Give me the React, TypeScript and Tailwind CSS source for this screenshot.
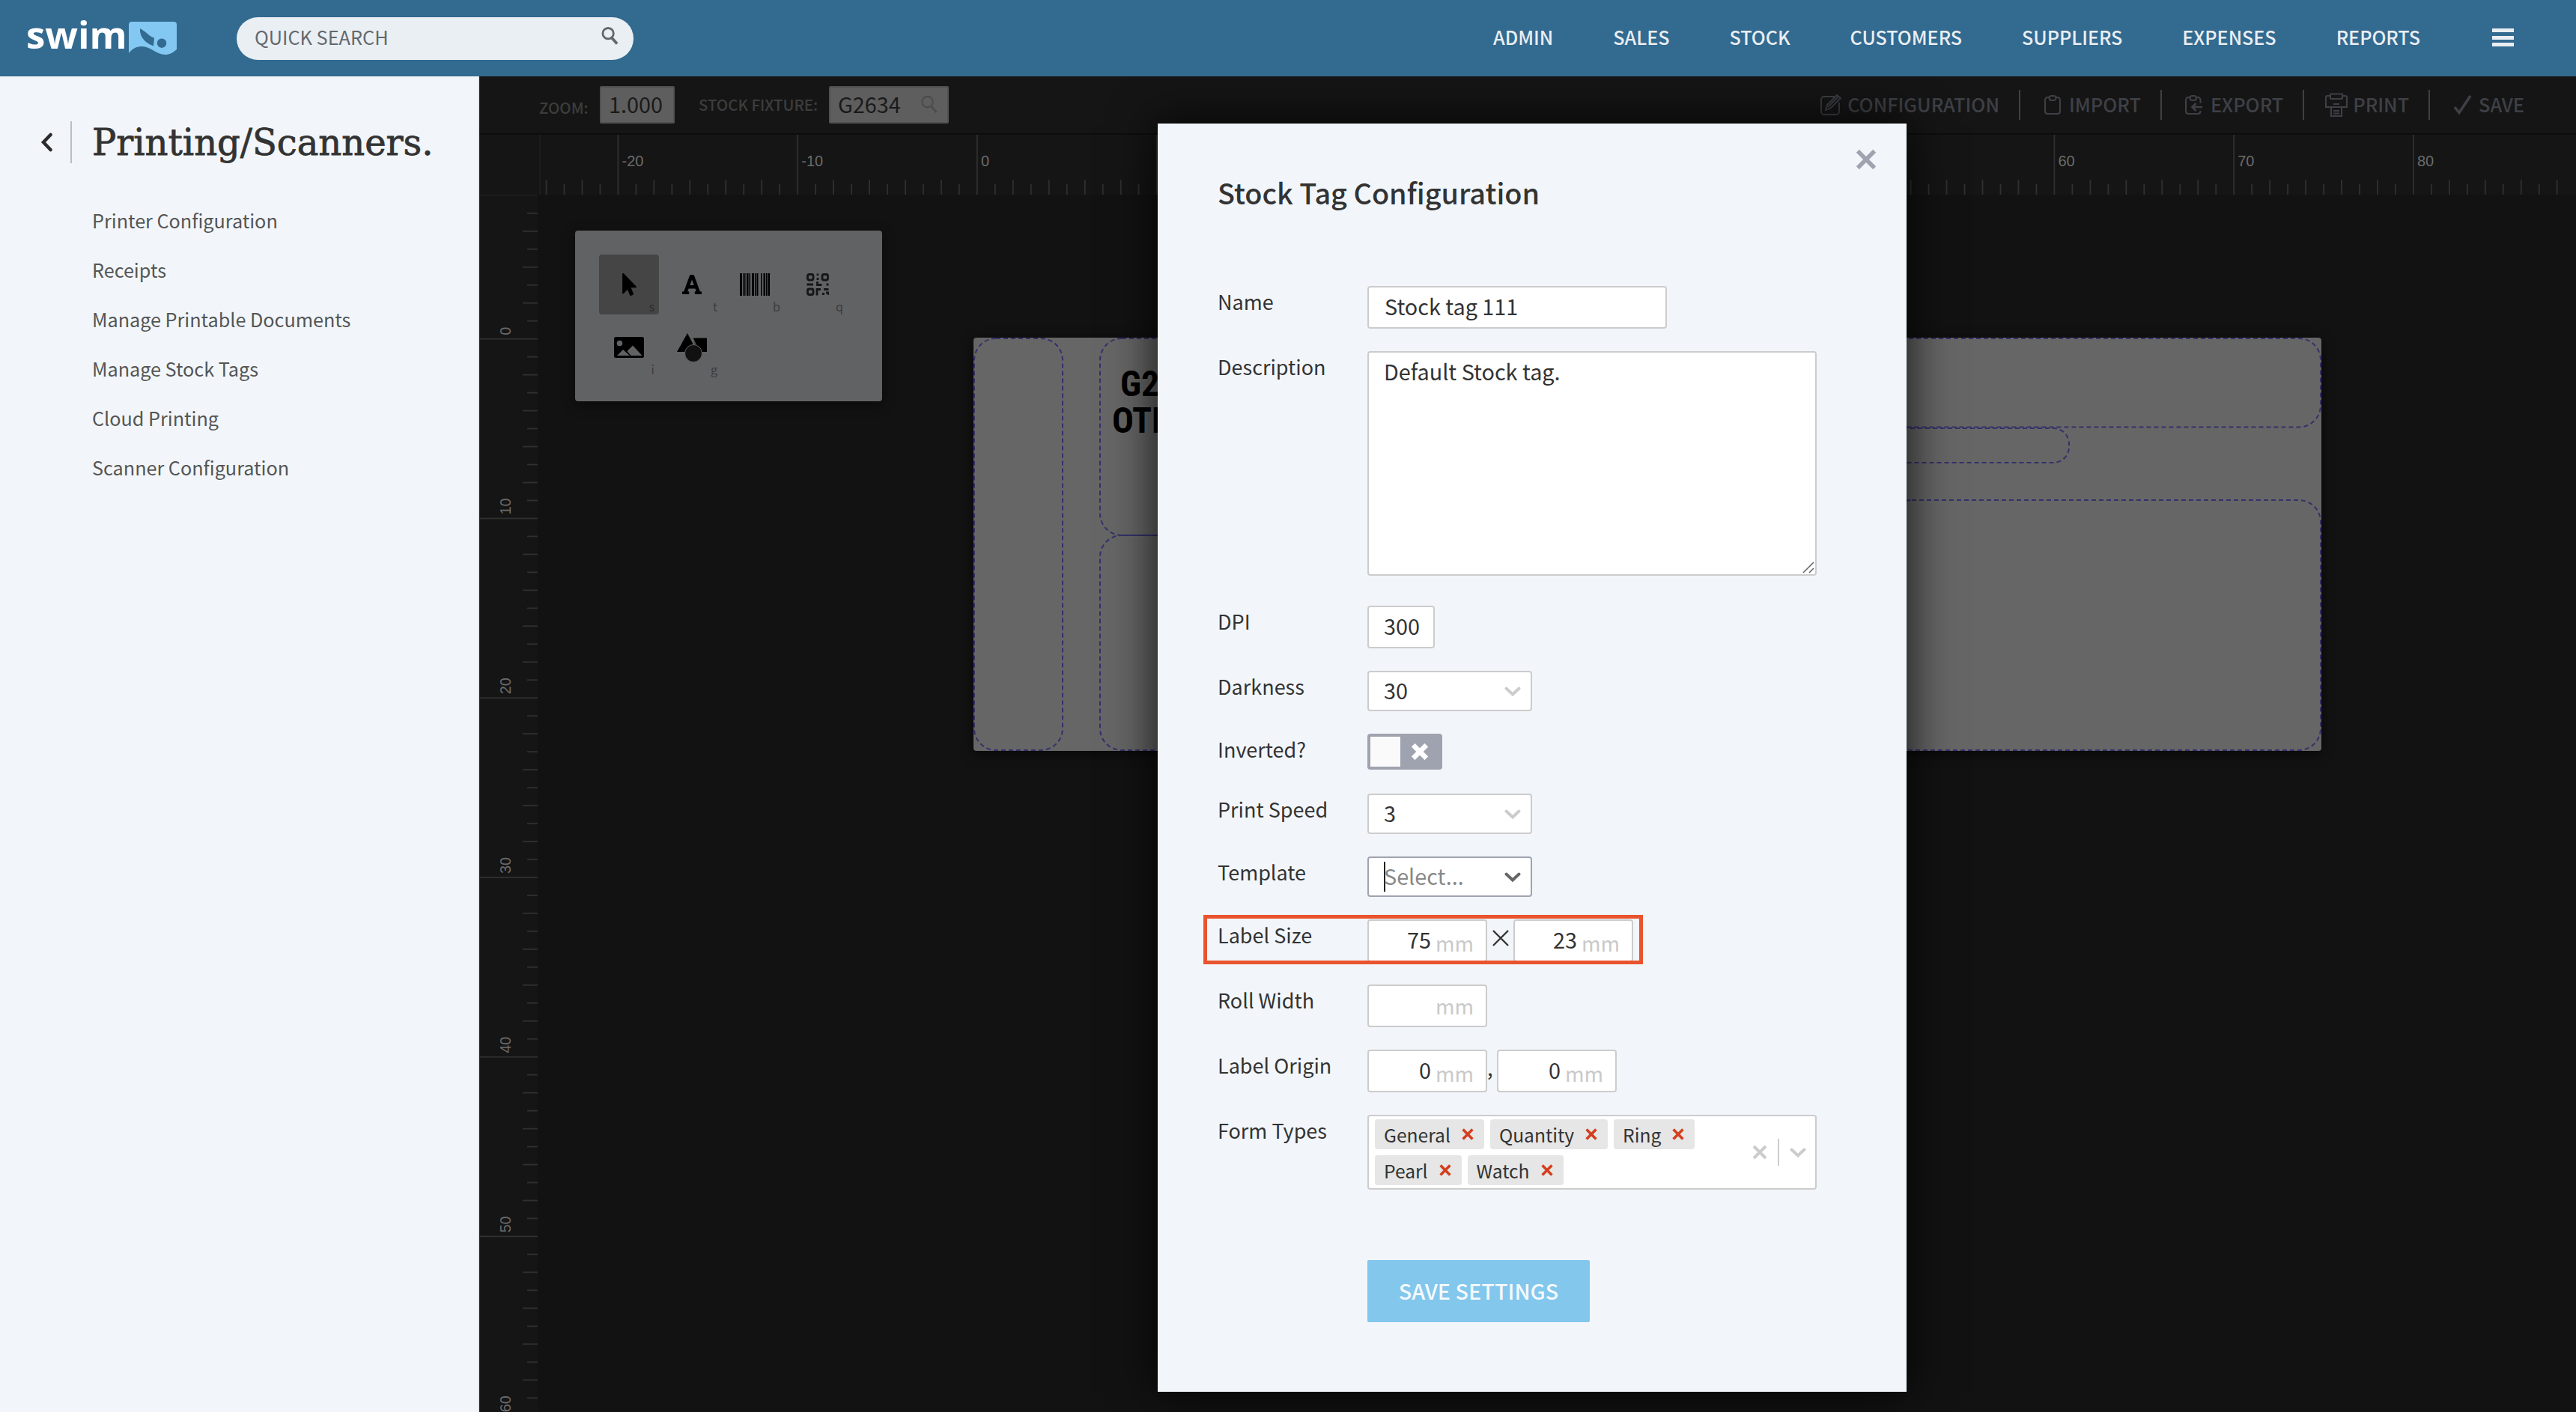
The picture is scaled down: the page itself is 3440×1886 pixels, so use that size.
import React from 'react';
import { FaFont, FaMousePointer } from 'react-icons/fa';

const navItems = ['ADMIN', 'SALES', 'STOCK', 'CUSTOMERS', 'SUPPLIERS', 'EXPENSES', 'REPORTS'];

const sidebarItems = [
  'Printer Configuration',
  'Receipts',
  'Manage Printable Documents',
  'Manage Stock Tags',
  'Cloud Printing',
  'Scanner Configuration',
];

// One millimetre on screen, in px
const MM = 23.975;

const Logo: React.FC = () => (
  <div className="flex items-center w-[201px] h-full">
    <span className="w-[137px] font-['Open_Sans',sans-serif] font-bold text-[51px] leading-[70px] text-white pb-[12px]">
      swim
    </span>
    <svg width="64" height="45" viewBox="0 0 64 45" className="shrink-0">
      <path
        fill="#82c8f2"
        fillRule="evenodd"
        d="M4 0H60a4 4 0 0 1 4 4V37C58 42 54 44 49 44C36 44 30 33 17 33C9 33 4 37 0 42V4a4 4 0 0 1 4-4Z
          M15 9C14 18 20 28 33 32.500L34 21.500C29 21 24 14 15 9Z
          M44 22.500a6.200 6.200 0 1 0 .01 0Z"
      />
    </svg>
  </div>
);

const SearchIcon = ({ className, strokeWidth }: { className: string; strokeWidth: number }) => (
  <svg viewBox="0 0 24 26" className={className} fill="none" stroke="currentColor" strokeWidth={strokeWidth}>
    <circle cx="9.500" cy="9.500" r="7.500" />
    <path d="M14.500 15.500L22 24" strokeWidth={strokeWidth * 1.3} />
  </svg>
);

const CloseIcon = ({ size, strokeWidth, className }: { size: number; strokeWidth: number; className?: string }) => (
  <svg width={size} height={size} viewBox="0 0 20 20" className={className} fill="none" stroke="currentColor" strokeWidth={strokeWidth}>
    <path d="M2 2L18 18M18 2L2 18" />
  </svg>
);

const ChevronIcon = ({ className }: { className?: string }) => (
  <svg width="22" height="13" viewBox="0 0 22 13" className={className} fill="none" stroke="currentColor" strokeWidth="4" strokeLinecap="round">
    <path d="M2.500 2.500L11 10.500L19.500 2.500" />
  </svg>
);

const Header: React.FC = () => (
  <header className="flex items-center h-[102px] shrink-0 bg-[#336a90] pl-[35px] pr-[83px]">
    <Logo />
    <div className="flex items-center justify-between w-[530px] h-[57px] ml-[80px] rounded-full bg-[#eaeff4] pl-[24px] pr-[20px] text-[#63686d]">
      <span className="text-[25.3px] leading-[40px] pb-[4px]">QUICK SEARCH</span>
      <SearchIcon className="w-[23px] h-[26px] mb-[7px]" strokeWidth={3} />
    </div>
    <nav className="flex items-center gap-[80px] ml-auto text-[25.1px] font-medium leading-[40px] text-[#e9eef2] pb-[4px]">
      {navItems.map(item => (
        <a key={item}>{item}</a>
      ))}
    </nav>
    <div className="flex flex-col gap-[4.500px] ml-[96px] mb-[2px]">
      <div className="w-[29px] h-[5px] bg-[#e9eef2]" />
      <div className="w-[29px] h-[5px] bg-[#e9eef2]" />
      <div className="w-[29px] h-[5px] bg-[#e9eef2]" />
    </div>
  </header>
);

const Sidebar: React.FC = () => (
  <aside className="w-[640px] shrink-0 bg-[#f2f6fa] border-r-2 border-[#e4e8eb] pt-[60px]">
    <div className="flex items-center h-[56px]">
      <svg width="16" height="26" viewBox="0 0 16 26" className="ml-[54px]" fill="none" stroke="#2b2b2b" strokeWidth="4.500" strokeLinecap="round">
        <path d="M13.500 3L4 13L13.500 23" />
      </svg>
      <div className="w-[2px] h-[56px] ml-[24px] bg-[#bcbfc2]" />
      <h1 className="ml-[27px] font-['DejaVu_Serif',serif] text-[48px] leading-[56px] text-[#333] [-webkit-text-stroke:0.8px_#333]">
        Printing/Scanners.
      </h1>
    </div>
    <ul className="mt-[43px] ml-[123px]">
      {sidebarItems.map(item => (
        <li key={item} className="h-[66px] text-[25.2px] leading-[67px] text-[#555]">
          {item}
        </li>
      ))}
    </ul>
  </aside>
);

const ConfigurationIcon = () => (
  <svg width="28" height="30" viewBox="0 0 28 30" fill="none" stroke="currentColor" strokeWidth="1.800">
    <path d="M19 4H5a4 4 0 0 0-4 4V24a4 4 0 0 0 4 4H21a4 4 0 0 0 4-4V12" />
    <path d="M7 22L9 15L22 2L27 6L13.500 19.500ZM10 18L23.500 4.500" />
  </svg>
);

const ClipboardIcon = () => (
  <svg width="22" height="28" viewBox="0 0 22 28" fill="none" stroke="currentColor" strokeWidth="2">
    <path d="M6 4H4.500A3.500 3.500 0 0 0 1 7.500V23A3.500 3.500 0 0 0 4.500 26H17.500A3.500 3.500 0 0 0 21 23V7.500A3.500 3.500 0 0 0 17.500 4H16" />
    <rect x="6.500" y="2" width="9" height="6" rx="3" />
  </svg>
);

const ExportIcon = () => (
  <svg width="24" height="28" viewBox="0 0 24 28" fill="none" stroke="currentColor" strokeWidth="2">
    <path d="M6 4H4.500A3.500 3.500 0 0 0 1 7.500V23A3.500 3.500 0 0 0 4.500 26H17A3.500 3.500 0 0 0 20.500 23V22M15.500 4H17A3.500 3.500 0 0 1 20.500 7.500V12" />
    <rect x="6.500" y="2" width="8.500" height="6" rx="3" />
    <path d="M23 17H10M14.500 12L9.500 17L14.500 22" strokeWidth="2.600" />
  </svg>
);

const PrintIcon = () => (
  <svg width="30" height="32" viewBox="0 0 30 32" fill="none" stroke="currentColor" strokeWidth="2">
    <path d="M7 8V1.500H23V8" />
    <path d="M7 4H3a2 2 0 0 0-2 2V19H29V6a2 2 0 0 0-2-2H23M7 8H23" />
    <path d="M11 15H19M8 20V31H22V20M11 24H19M11 27.500H19" />
  </svg>
);

const CheckIcon = () => (
  <svg width="25" height="28" viewBox="0 0 25 28" fill="none" stroke="currentColor" strokeWidth="3.600">
    <path d="M2 17L8 24.500L23 2" />
  </svg>
);

const toolbarActions = [
  { label: 'CONFIGURATION', icon: <ConfigurationIcon /> },
  { label: 'IMPORT', icon: <ClipboardIcon /> },
  { label: 'EXPORT', icon: <ExportIcon /> },
  { label: 'PRINT', icon: <PrintIcon /> },
  { label: 'SAVE', icon: <CheckIcon /> },
];

const Toolbar: React.FC = () => (
  <div className="flex items-center h-[78px] shrink-0 bg-[#151515] border-b-2 border-[#0d0d0d] pl-[80px] pr-[69px]">
    <span className="w-[81px] text-[20.4px] font-medium leading-[30px] text-[#3d3d3d] pt-[6px]">ZOOM:</span>
    <div className="flex items-center w-[100px] h-[50px] rounded-xs border-2 border-[#515151] bg-[#5e5e5e] pl-[10px] text-[28.8px] text-[#1a1a1a] leading-[44px] pb-[2px]">
      1.000
    </div>
    <span className="w-[174px] ml-[32px] text-[20.4px] font-medium leading-[30px] text-[#3d3d3d] pb-[2px] whitespace-nowrap">STOCK FIXTURE:</span>
    <div className="flex items-center justify-between w-[160px] h-[50px] rounded-xs border-2 border-[#515151] bg-[#5e5e5e] pl-[10px] pr-[12px] pb-[2px]">
      <span className="text-[28.8px] text-[#1a1a1a] leading-[44px]">G2634</span>
      <SearchIcon className="w-[24px] h-[25px] text-[#4c4c4c]" strokeWidth={2.200} />
    </div>
    <div className="flex items-center ml-auto">
      {toolbarActions.map(({ label, icon }, index) => (
        <div
          key={label}
          className={`flex items-center h-[40px] text-[#3f4046] ${index < toolbarActions.length - 1 ? 'border-r-2 border-[#3f4046] pr-[26px]' : ''}`}
        >
          <div className="flex justify-center w-[30px] ml-[28px] mr-[7px]">{icon}</div>
          <span className="text-[25.3px] font-medium leading-[36px] pb-[3px]">{label}</span>
        </div>
      ))}
    </div>
  </div>
);

const range = (from: number, to: number) => Array.from({ length: to - from + 1 }, (_, i) => from + i);

const tickLength = (n: number, full: number) => (n % 10 === 0 ? full : n % 2 === 0 ? 20 : 14);

const HorizontalRuler: React.FC = () => (
  <svg width="2800" height="80" className="block shrink-0 bg-[#151515]" fontFamily="Liberation Sans, Arial, sans-serif" fontSize="20">
    <rect x="80" y="0" width="2" height="80" fill="#1d1d1d" />
    {range(-24, 88).map(n => {
      const x = 665 + n * MM;
      const h = tickLength(n, 80);
      return (
        <g key={n}>
          <rect x={x - 1} y={80 - h} width="1.800" height={h} fill="#303030" />
          {n % 10 === 0 && <text x={x + 5} y="42" fill="#6b6b6b">{n}</text>}
        </g>
      );
    })}
  </svg>
);

const VerticalRuler: React.FC = () => (
  <svg width="78" height="1626" className="block shrink-0 bg-[#151515]" fontFamily="Liberation Sans, Arial, sans-serif" fontSize="20">
    <rect x="0" y="0" width="78" height="2" fill="#1c1c1c" />
    {range(-7, 60).map(n => {
      const y = 192.8 + n * MM;
      const w = tickLength(n, 77);
      return (
        <g key={n}>
          <rect x={78 - w} y={y - 1} width={w} height="1.800" fill="#303030" />
          {n % 10 === 0 && (
            <text transform={`translate(42 ${y - 5}) rotate(-90)`} fill="#6b6b6b">{n}</text>
          )}
        </g>
      );
    })}
  </svg>
);

const BarcodeIcon = () => (
  <svg width="40" height="30" viewBox="0 0 40 30">
    {[[0, 3], [4, 1], [6, 1.5], [9, 2.5], [12.5, 1.500], [16, 3], [20, 1.5], [22.500, 2], [28, 1.5], [31.5, 2.5], [35, 1.500], [37.5, 2.500]].map(([x, w]) => (
      <rect key={x} x={x} y="0" width={w} height="30" />
    ))}
  </svg>
);

const QrIcon = () => (
  <svg width="30" height="30" viewBox="0 0 30 30" fill="none" stroke="#161616" strokeWidth="2.800">
    <rect x="1.500" y="1.500" width="7.500" height="7.500" rx="2" />
    <rect x="21" y="1.500" width="7.500" height="7.500" rx="2" />
    <rect x="1.500" y="21" width="7.500" height="7.500" rx="2" />
    <path d="M15 0.500V3M15 6V9M0.500 15H9M14.500 11V15.500H20.500M26.500 15H29.500M14 29.500V21.500H19M23 21.500H29.500M21 27.500H24M26 26H29.500V29" />
  </svg>
);

const ImageIcon = () => (
  <svg width="40" height="28" viewBox="0 0 40 28">
    <rect width="40" height="28" rx="2.500" />
    <circle cx="7.500" cy="8.500" r="3.800" fill="#616264" />
    <path d="M4 25L12 17L21 25ZM17.500 19L25 11.500L37.500 25H22.500Z" fill="#616264" />
  </svg>
);

const ShapesIcon = () => (
  <svg width="40" height="39" viewBox="0 0 40 39">
    <path d="M14 0L27 25H0Z" />
    <path d="M21 6.500H40V25H28Z" />
    <path d="M21 6L26 17" stroke="#616264" strokeWidth="1" />
    <circle cx="22" cy="27" r="11.500" fill="#111" stroke="#616264" strokeWidth="1" />
  </svg>
);

const tools = [
  { key: 's', icon: <FaMousePointer className="w-[19px] h-[30px]" />, active: true },
  { key: 't', icon: <FaFont className="w-[26px] h-[30px]" /> },
  { key: 'b', icon: <BarcodeIcon /> },
  { key: 'q', icon: <QrIcon /> },
  { key: 'i', icon: <ImageIcon /> },
  { key: 'g', icon: <ShapesIcon /> },
];

const ToolPanel: React.FC = () => (
  <div className="absolute left-[50px] top-[48px] w-[410px] h-[228px] rounded-sm bg-[#616264] p-[32px] shadow-[0_4px_16px_rgba(0,0,0,0.5)]">
    <div className="flex flex-wrap gap-1 text-black">
      {tools.map(({ key, icon, active }) => (
        <div key={key} className={`relative flex items-center justify-center w-[80px] h-[80px] rounded-sm ${active ? 'bg-[#454545]' : ''}`}>
          {icon}
          <span className={`absolute right-[6px] bottom-[1px] text-[16px] leading-[20px] ${active ? 'text-[#2c2c2c]' : 'text-[#3c3c3e]'}`}>{key}</span>
        </div>
      ))}
    </div>
  </div>
);

const labelRegions = [
  { x: 1, y: 1, w: 118, h: 550, r: 29 },
  { x: 169, y: 1, w: 500, h: 263, r: 29 },
  { x: 169, y: 264, w: 500, h: 287, r: 29 },
  { x: 700, y: 1, w: 1099, h: 118.5, r: 29 },
  { x: 700, y: 121, w: 763, h: 46, r: 21 },
  { x: 1224, y: 217, w: 575, h: 334, r: 29 },
];

const LabelPreview: React.FC = () => (
  <div className="absolute left-[582px] top-[191px] w-[1800px] h-[552px] rounded-sm bg-[#666] shadow-[0_4px_16px_rgba(0,0,0,0.6)]">
    <svg width="1800" height="552" fill="none">
      {labelRegions.map(({ x, y, w, h, r }) => (
        <rect key={`${x}-${y}`} x={x} y={y} width={w} height={h} rx={r} stroke="#34316b" strokeWidth="2" strokeDasharray="6 4" />
      ))}
    </svg>
    <div className="absolute left-[185px] top-[37px] font-['Roboto_Condensed',Roboto,sans-serif] font-bold text-[48px] leading-[49px] text-black">
      <div className="ml-[11px]">G2634</div>
      <div>OTHER</div>
    </div>
  </div>
);

const Field = ({ label, children }: { label: string; children: React.ReactNode }) => (
  <div className="flex items-start">
    <label className="w-[200px] shrink-0 text-[27px] leading-[41px] text-[#333]">{label}</label>
    {children}
  </div>
);

const Select = ({ value }: { value: string }) => (
  <div className="flex items-center justify-between w-[220px] h-[54px] rounded-sm border-2 border-[#ccc] bg-white pl-[20px] pr-[13px]">
    <span className="text-[28.8px] leading-[40px] pb-[2px]">{value}</span>
    <ChevronIcon className="text-[#ccc]" />
  </div>
);

const MmInput = ({ value }: { value?: string }) => (
  <div className="flex items-center justify-end w-[160px] h-[57px] rounded-sm border-2 border-[#ccc] bg-white pr-[16px]">
    {value && <span className="text-[28.8px] leading-[40px] pb-[3px]">{value}</span>}
    <span className={`ml-[6px] text-[27.600px] leading-[40px] text-[#c9c9c9] ${value ? 'pt-[4px]' : 'pb-[2px]'}`}>mm</span>
  </div>
);

const Chip = ({ label }: { label: string }) => (
  <div className="flex items-center h-[40px] rounded-sm bg-[#e6e6e6] pl-[12px] pr-[14px]">
    <span className="text-[24.600px] leading-[40px]">{label}</span>
    <CloseIcon size={16} strokeWidth={4.500} className="ml-[15px] text-[#d33f1e]" />
  </div>
);

const formTypes = ['General', 'Quantity', 'Ring', 'Pearl', 'Watch'];

const ConfigurationModal: React.FC = () => (
  <div className="relative w-[1000px] h-[1694px] bg-[#f2f6fa] pt-[68px] pl-[80px] text-[#333] shadow-[0_0_60px_rgba(0,0,0,0.85)]">
    <CloseIcon size={28} strokeWidth={4} className="absolute right-[40px] top-[34px] text-[#9fa3b0]" />
    <h2 className="text-[37.800px] font-medium leading-[48px]">Stock Tag Configuration</h2>

    <div className="flex flex-col gap-[30px] mt-[101px]">
      <Field label="Name">
        <div className="flex items-center w-[400px] h-[57px] rounded-sm border-2 border-[#ccc] bg-white pl-[21px] pb-[4px] text-[28.800px] leading-[40px]">
          Stock tag 111
        </div>
      </Field>

      <Field label="Description">
        <div className="relative w-[600px] h-[300px] mb-[10px] rounded-sm border-2 border-[#ccc] bg-white pl-[20px] pt-[5px] text-[28.800px] leading-[40px]">
          Default Stock tag.
          <svg width="16" height="16" viewBox="0 0 16 16" className="absolute right-[1px] bottom-[1px]" stroke="#666" strokeWidth="1.500">
            <path d="M1 15L15 1M9 15L15 9" />
          </svg>
        </div>
      </Field>

      <Field label="DPI">
        <div className="flex items-center w-[90px] h-[57px] rounded-sm border-2 border-[#ccc] bg-white pl-[20px] pb-[3px] text-[28.800px] leading-[40px]">
          300
        </div>
      </Field>

      <Field label="Darkness">
        <Select value="30" />
      </Field>

      <Field label="Inverted?">
        <div className="flex items-center w-[100px] h-[48px] mb-[2px] rounded-sm bg-[#9fa3af] p-[4px]">
          <div className="w-[40px] h-[40px] bg-[#fafafa]" />
          <CloseIcon size={22} strokeWidth={6} className="ml-[15px] text-white" />
        </div>
      </Field>

      <Field label="Print Speed">
        <Select value="3" />
      </Field>

      <Field label="Template">
        <div className="flex items-center justify-between w-[220px] h-[54px] rounded-sm border-2 border-[#9fa3b0] bg-white pl-[20px] pr-[13px]">
          <div className="w-[2px] h-[40px] -mr-[2px] bg-[#222]" />
          <span className="mr-auto text-[28.800px] leading-[40px] pb-[2px] text-[#888]">Select...</span>
          <ChevronIcon className="text-[#666]" />
        </div>
      </Field>

      <div className="relative">
        <Field label="Label Size">
          <MmInput value="75" />
          <svg width="22" height="22" viewBox="0 0 22 22" className="mx-[6.500px] mt-[14px]" stroke="#333" strokeWidth="2.400">
            <path d="M1 1L21 21M21 1L1 21" />
          </svg>
          <MmInput value="23" />
        </Field>
        <div className="absolute -left-[19px] -top-[6px] w-[587px] h-[66px] border-5 border-[#e9532d]" />
      </div>

      <Field label="Roll Width">
        <MmInput />
      </Field>

      <Field label="Label Origin">
        <MmInput value="0" />
        <span className="w-[13px] text-[27.200px] leading-[46px]">,</span>
        <MmInput value="0" />
      </Field>

      <Field label="Form Types">
        <div className="flex items-center w-[600px] h-[100px] rounded-sm border-2 border-[#ccc] bg-white pl-[8px] pr-[12px]">
          <div className="flex flex-wrap gap-2 w-[496px]">
            {formTypes.map(type => (
              <Chip key={type} label={type} />
            ))}
          </div>
          <CloseIcon size={20} strokeWidth={4} className="ml-[8px] text-[#ccc]" />
          <div className="w-[2px] h-[36px] ml-[14px] bg-[#ccc]" />
          <ChevronIcon className="ml-auto text-[#ccc]" />
        </div>
      </Field>
    </div>

    <button className="block w-[297px] h-[83px] ml-[200px] mt-[94px] rounded-xs bg-[#83c7ec] text-[28.800px] font-medium leading-[40px] text-[#f4f9fc] pb-[2px]">
      SAVE SETTINGS
    </button>
  </div>
);

const App: React.FC = () => {
  return (
    <div className="flex flex-col w-[3440px] h-[1886px] overflow-hidden font-['Noto_Sans_CJK_SC',sans-serif]">
      <Header />
      <div className="flex flex-1 min-h-0">
        <Sidebar />
        <main className="relative flex flex-col w-[2800px] bg-[#121212] overflow-hidden">
          <Toolbar />
          <HorizontalRuler />
          <div className="flex flex-1">
            <VerticalRuler />
            <div className="relative flex-1">
              <ToolPanel />
              <LabelPreview />
            </div>
          </div>
          <div className="absolute inset-0 flex items-start justify-center pt-[63px] pl-[12px]">
            <ConfigurationModal />
          </div>
        </main>
      </div>
    </div>
  );
};

export default App;
